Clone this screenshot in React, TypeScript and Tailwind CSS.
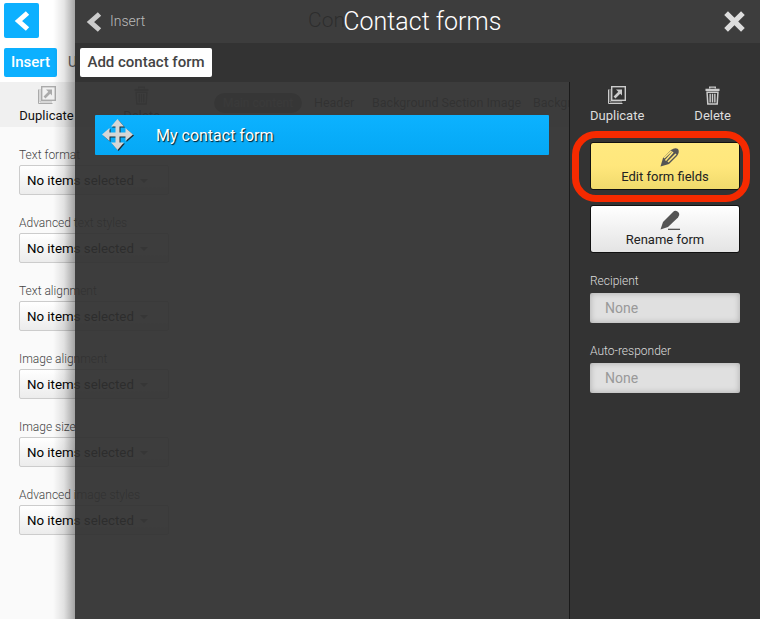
const fieldLabels = [
  "Text format",
  "Advanced text styles",
  "Text alignment",
  "Image alignment",
  "Image size",
  "Advanced image styles",
];

function Chevron({ className }: { className: string }) {
  return (
    <svg viewBox="0 0 16 20" className={className} fill="none" stroke="currentColor" strokeWidth="5">
      <path d="M13.500 2 L4.500 10 L13.500 18" />
    </svg>
  );
}

function DuplicateIcon({ className }: { className: string }) {
  return (
    <svg viewBox="0 0 18 18" className={className} fill="none" stroke="currentColor">
      <path d="M0.500 3.500V17.500H14.500" strokeWidth="1" />
      <path d="M2 3V16H14" strokeWidth="0.700" />
      <rect x="3.700" y="0.700" width="13.600" height="13.600" strokeWidth="1.400" />
      <path d="M6.500 11.500 L11.500 6.500" strokeWidth="2.600" />
      <path d="M8 3.500h6v6z" fill="currentColor" stroke="none" />
    </svg>
  );
}

function TrashIcon({ className }: { className: string }) {
  return (
    <svg viewBox="0 0 16 20" className={className} fill="none" stroke="currentColor">
      <path d="M5 2.500 V1 h6 v1.500" strokeWidth="1.400" />
      <path d="M0.500 4h15" strokeWidth="2.400" />
      <path d="M2.200 6.500h11.600l-0.800 12.500H3z" strokeWidth="1.600" />
      <path d="M5.500 8v9.500M8 8v9.500M10.500 8v9.500" strokeWidth="1.500" />
    </svg>
  );
}

function MoveIcon({ className }: { className: string }) {
  const arrows =
    "M15.500 0 L22 7.500 H17.500 V13.500 H23.500 V9 L31 15.500 L23.500 22 V17.500 H17.500 V23.500 H22 L15.500 31 L9 23.500 H13.500 V17.500 H7.500 V22 L0 15.500 L7.500 9 V13.500 H13.500 V7.500 H9 Z";
  return (
    <svg viewBox="0 0 32 32" className={className}>
      <path d={arrows} fill="#1d2a33" transform="translate(1 1)" />
      <path d={arrows} fill="#d6d6d6" />
    </svg>
  );
}

function DashboardBehind() {
  return (
    <div className="h-[619px] bg-[#fafafa] text-[#222]">
      <div className="h-[82px] bg-white pl-[4px] pt-[3px]">
        <div className="flex h-[35px] items-center">
          <div className="flex h-[35px] w-[35px] items-center justify-center rounded-[2px] bg-[#0cb0ff] text-white">
            <Chevron className="h-[20px] w-[16px]" />
          </div>
          <span className="ml-[269px] text-[21px] font-light text-black">Con</span>
        </div>
        <div className="mt-[10px] flex items-center">
          <div className="flex h-[29px] w-[53px] items-center justify-center rounded-[2px] bg-[#0cb0ff] text-[15px] font-medium text-white">
            Insert
          </div>
          <span className="ml-[11px] text-[14px] text-[#666]">U</span>
        </div>
      </div>
      <div className="flex h-[45px] items-start bg-[#f0f0f0] pt-[4px]">
        <div className="ml-[19px] flex w-[55px] flex-col items-center">
          <div className="h-[20px]">
            <DuplicateIcon className="h-[18px] w-[18px] text-[#aaa]" />
          </div>
          <span className="text-[13px] text-[#111]">Duplicate</span>
        </div>
        <div className="ml-[49px] flex w-[37px] flex-col items-center">
          <div className="h-[20px]">
            <TrashIcon className="h-[19px] w-[15px] text-[#888]" />
          </div>
          <span className="text-[13px] text-[#444]">Delete</span>
        </div>
        <div className="ml-[54px] mt-[7px] flex h-[20px] w-[88px] items-center justify-center rounded-full bg-[#909090] text-[12px] text-[#c8c8c8]">
          Main content
        </div>
        <div className="ml-[12px] mt-[8px] flex gap-[21px] text-[12.500px] text-[#555]">
          <span className="w-[37px]">Header</span>
          <span className="w-[140px] whitespace-nowrap">Background Section Image</span>
          <span>Background</span>
        </div>
      </div>
      <div className="flex flex-col gap-[20px] pl-[19px] pt-[20px]">
        {fieldLabels.map((label) => (
          <div key={label}>
            <div className="h-[18px] text-[12px] leading-[16px] font-light text-[#444]">{label}</div>
            <div className="flex h-[30px] w-[150px] items-center gap-[6px] rounded-[2px] border border-[#ccc] bg-gradient-to-b from-white to-[#ececec] pl-[7px] pt-[1px] text-[13.300px] text-black">
              No items selected
              <span className="h-0 w-0 border-x-[4px] border-t-[4px] border-x-transparent border-t-[#888]" />
            </div>
          </div>
        ))}
      </div>
    </div>
  );
}

function ToolButton({ label, tone, icon }: { label: string; tone: string; icon: React.ReactNode }) {
  return (
    <div className={`flex h-[48px] flex-col items-center rounded-[3px] border border-[#111] pt-[4px] text-[#222] ${tone}`}>
      <div className="ml-[10px] h-[20px] text-[#555]">{icon}</div>
      <span className="text-[13px] leading-[20px]">{label}</span>
    </div>
  );
}

function GreySelect({ label }: { label: string }) {
  return (
    <div>
      <div className="h-[16px] text-[12px] leading-[16px] font-light text-[#ddd]">{label}</div>
      <div className="mt-[4px] flex h-[30px] items-center rounded-[2px] bg-[#e0e0e0] pl-[15px] text-[14px] text-[#999] shadow-[inset_0_0_6px_rgba(0,0,0,0.25)]">
        None
      </div>
    </div>
  );
}

export default function App() {
  return (
    <div className="relative h-[619px] w-[760px] overflow-hidden font-['Roboto',sans-serif]">
      <DashboardBehind />

      {/* shadow the modal throws on the page */}
      <div className="absolute inset-y-0 left-[53px] w-[22px] bg-gradient-to-l from-black/35 via-black/10 to-transparent" />

      {/* contact forms modal, slightly see-through */}
      <div className="absolute inset-y-0 left-[75px] right-0 flex flex-col bg-[rgba(48,48,48,0.937)]">
        <div className="flex h-[43px] flex-none items-center pl-[11px] pr-[15px]">
          <Chevron className="h-[20px] w-[16px] text-[#ccc]" />
          <span className="ml-[8px] text-[14px] font-light text-[#bbb]">Insert</span>
          <span className="ml-[198px] text-[25px] font-light text-white">Contact forms</span>
          <svg viewBox="0 0 20 20" className="ml-auto h-[21px] w-[21px] text-[#ddd]" stroke="currentColor" strokeWidth="5">
            <path d="M2 2 L18 18 M18 2 L2 18" />
          </svg>
        </div>
        <div className="flex h-[39px] flex-none items-start bg-[#333] pl-[5px] pt-[5px]">
          <div className="flex h-[29px] w-[132px] items-center justify-center rounded-[2px] bg-white text-[15px] font-medium text-[#444]">
            Add contact form
          </div>
        </div>
        <div className="flex flex-1">
          <div className="flex-1 pl-[20px] pr-[20px] pt-[33px]">
            <div className="flex h-[40px] items-center rounded-[1px] bg-gradient-to-b from-[#0cb2ff] to-[#05a8f5] pl-[7px] text-[16px] text-white [text-shadow:1px_1px_1px_rgba(0,0,0,0.85)]">
              <MoveIcon className="h-[32px] w-[32px]" />
              <span className="ml-[22px] mt-[2px]">My contact form</span>
            </div>
          </div>
          <div className="relative w-[191px] flex-none border-l border-[#1a1a1a] bg-[#333] px-[20px]">
            <div className="flex h-[60px] items-start justify-between pt-[4px] pr-[9px] text-[13px] text-[#ddd]">
              <div className="flex flex-col items-center">
                <div className="h-[20px]">
                  <DuplicateIcon className="h-[18px] w-[18px] text-[#ccc]" />
                </div>
                <span>Duplicate</span>
              </div>
              <div className="flex flex-col items-center">
                <div className="h-[20px]">
                  <TrashIcon className="h-[19px] w-[15px] text-[#ccc]" />
                </div>
                <span>Delete</span>
              </div>
            </div>
            <div className="flex flex-col gap-[15px]">
              <ToolButton
                label="Edit form fields"
                tone="bg-gradient-to-b from-[#ffe980] via-[#ffe77c] to-[#f0da6c]"
                icon={
                  <svg viewBox="0 0 20 20" className="h-[20px] w-[20px]" fill="currentColor">
                    <path d="M0.500 19.500 L3 11 L11 3 Q15 0 18 2 Q20 5 17 9 L9 17 Z" />
                    <path d="M5.500 13.500 L13 5 M8 15 L16 7 M4 11 L11.500 4" stroke="#ffe77c" strokeWidth="1.600" fill="none" />
                  </svg>
                }
              />
              <ToolButton
                label="Rename form"
                tone="bg-gradient-to-b from-white to-[#e4e4e4]"
                icon={
                  <svg viewBox="0 0 20 20" className="h-[20px] w-[20px]" fill="currentColor">
                    <path d="M0.500 19.500 L3 12 L13 2 Q15 0 17.500 1.500 L19 3 Q20 5 18 7.500 L8 17 Z" />
                    <rect x="8" y="18.700" width="12" height="1.300" />
                  </svg>
                }
              />
            </div>
            <div className="mt-[20px] flex flex-col gap-[20px]">
              <GreySelect label="Recipient" />
              <GreySelect label="Auto-responder" />
            </div>
            {/* red callout drawn on top of the screenshot */}
            <div className="absolute left-[2px] top-[49px] h-[71px] w-[178px] rounded-[24px] border-[7px] border-[#f52a00]" />
          </div>
        </div>
      </div>
    </div>
  );
}
